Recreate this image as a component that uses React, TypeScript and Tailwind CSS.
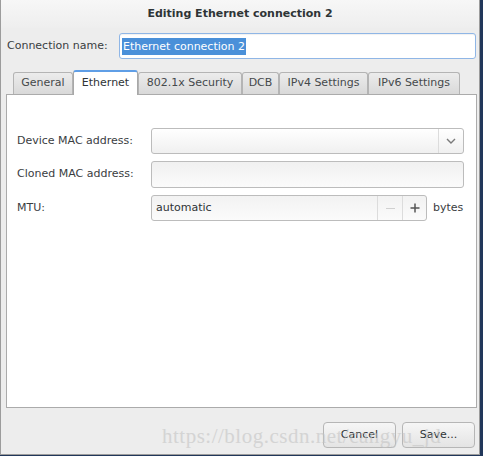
import React from "react";

const tabs = [
  { label: "General", w: "w-[60px]" },
  { label: "Ethernet", w: "w-[65px]", active: true },
  { label: "802.1x Security", w: "w-[104px]" },
  { label: "DCB", w: "w-[37px]" },
  { label: "IPv4 Settings", w: "w-[89px]" },
  { label: "IPv6 Settings", w: "w-[92px]" },
];

export default function App() {
  return (
    <div
      className="relative w-[483px] h-[456px] bg-[#21375a] overflow-hidden text-[11px] text-[#2e3436]"
      style={{ fontFamily: '"DejaVu Sans", sans-serif' }}
    >
      <div className="w-[480px] h-[455px] flex flex-col bg-[#ededed] border-l border-r border-b border-[#9c9c9c]">
        {/* title */}
        <div className="h-[28px] shrink-0 flex items-center justify-center bg-gradient-to-b from-[#f7f7f7] to-[#eeeeee] font-bold text-[#2e3436]">
          Editing Ethernet connection 2
        </div>
        {/* connection name */}
        <div className="flex items-center h-[26px] mt-[5px] pl-[6px]">
          <span className="w-[112px] shrink-0 text-[#3a3d3f]">Connection name:</span>
          <div className="w-[357px] h-[26px] rounded-[3px] border border-[#8fb6e6] bg-white flex items-center pl-[2px] shadow-[inset_0_1px_1px_rgba(0,0,0,0.06)]">
            <span className="bg-[#4a90d9] text-white px-[1px] leading-[17px] h-[17px]">Ethernet connection 2</span>
          </div>
        </div>
        {/* tabs */}
        <div className="flex items-end h-[24px] mt-[11px] pl-[12px]">
          {tabs.map((t) =>
            t.active ? (
              <div
                key={t.label}
                className={`${t.w} h-[25px] -mb-px relative z-10 flex items-center justify-center bg-white border border-b-0 border-[#a8a8a8] border-t-[#5f9ee6] border-t-2 rounded-t-[3px] text-[#2e3436]`}
              >
                {t.label}
              </div>
            ) : (
              <div
                key={t.label}
                className={`${t.w} h-[22px] flex items-center justify-center bg-gradient-to-b from-[#ececec] to-[#d9d9d9] border border-b-0 border-[#b4b4b4] rounded-t-[3px] text-[#45494b]`}
              >
                {t.label}
              </div>
            )
          )}
        </div>
        {/* panel */}
        <div className="mx-[5px] w-[471px] h-[314px] border border-[#ababab] bg-white pt-[33px] pl-[10px] flex flex-col gap-[7px] text-[#3a3d3f]">
          <div className="flex items-center h-[26px]">
            <span className="w-[134px] shrink-0">Device MAC address:</span>
            <div className="w-[313px] h-[26px] rounded-[3px] border border-[#bcbcbc] bg-gradient-to-b from-white to-[#f0f0f0] flex justify-end">
              <div className="w-[25px] h-full border-l border-[#dcdcdc] flex items-center justify-center">
                <svg width="10" height="6" viewBox="0 0 10 6">
                  <path d="M1 1 L5 5 L9 1" fill="none" stroke="#7a7a7a" strokeWidth="1.4" />
                </svg>
              </div>
            </div>
          </div>
          <div className="flex items-center h-[27px]">
            <span className="w-[134px] shrink-0">Cloned MAC address:</span>
            <div className="w-[313px] h-[27px] rounded-[3px] border border-[#bcbcbc] bg-gradient-to-b from-[#f0f0f0] to-[#fbfbfb]" />
          </div>
          <div className="flex items-center h-[26px]">
            <span className="w-[134px] shrink-0">MTU:</span>
            <div className="w-[276px] h-[26px] rounded-[3px] border border-[#bcbcbc] bg-gradient-to-b from-[#f2f2f2] to-[#fbfbfb] flex items-center">
              <span className="flex-1 pl-[4px] text-[#2e3436]">automatic</span>
              <div className="w-[25px] h-full border-l border-[#dcdcdc] flex items-center justify-center">
                <div className="w-[9px] h-px bg-[#d0d0d0]" />
              </div>
              <div className="w-[24px] h-full border-l border-[#dcdcdc] flex items-center justify-center">
                <svg width="10" height="10" viewBox="0 0 10 10">
                  <path d="M5 0.5 V9.5 M0.5 5 H9.5" stroke="#555" strokeWidth="1.5" />
                </svg>
              </div>
            </div>
            <span className="ml-[6px]">bytes</span>
          </div>
        </div>
        {/* buttons */}
        <div className="flex justify-end gap-[6px] pr-[4px] mt-[14px]">
          <div className="w-[73px] h-[26px] rounded-[4px] border border-[#b6b6b6] bg-gradient-to-b from-[#f6f6f6] to-[#e4e4e4] flex items-center justify-center">
            Cancel
          </div>
          <div className="w-[73px] h-[26px] rounded-[4px] border border-[#b6b6b6] bg-gradient-to-b from-[#f6f6f6] to-[#e4e4e4] flex items-center justify-center">
            Save...
          </div>
        </div>
      </div>
      {/* watermark */}
      <div
        className="absolute left-[162px] top-[423px] text-[21px] leading-[26px] text-[#c4c4c4] opacity-60 pointer-events-none whitespace-nowrap tracking-[0.5px]"
        style={{ fontFamily: '"Liberation Serif", serif' }}
      >
        https://blog.csdn.net/cangyu_jd
      </div>
    </div>
  );
}
